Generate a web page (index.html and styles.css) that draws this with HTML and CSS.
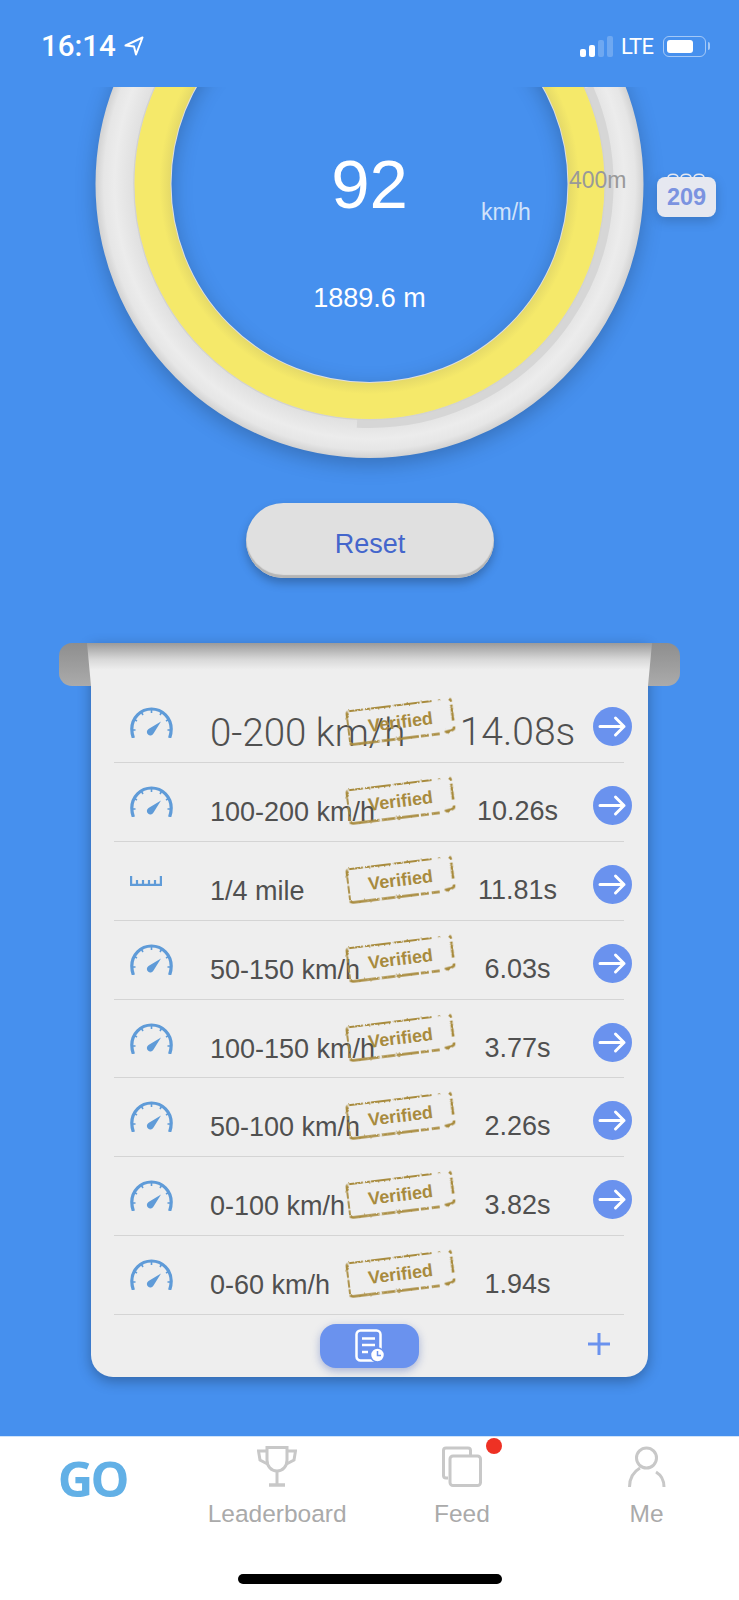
FILE: index.html
```html
<!DOCTYPE html>
<html lang="en">
<head>
  <meta charset="UTF-8" />
  <meta name="viewport" content="width=device-width, initial-scale=1.0" />
  <title>GO</title>
  <link rel="stylesheet" href="styles.css">
</head>
<body>
  <svg class="sprite" width="0" height="0">
    <defs>
      <filter id="rough" x="-5%" y="-10%" width="110%" height="120%">
        <feTurbulence type="fractalNoise" baseFrequency="0.4" numOctaves="2" seed="4" />
        <feDisplacementMap in="SourceGraphic" scale="2.6" />
      </filter>
      <symbol id="stamp" viewBox="0 0 109 38">
        <g filter="url(#rough)" fill="none" stroke="#a88b3e">
          <path stroke-width="2.2" stroke-dasharray="7 1.5 14 2 5 1 20 3 9 1 16 2 10" d="M2 9V5Q2 2 5 2H105" />
          <path stroke-width="2.6" stroke-dasharray="4 3 16 6 12" d="M105 2Q107 2 107 5V31Q107 33 104 33.500L97 34.500" />
          <path stroke-width="2.6" stroke-dasharray="8 3 8 2 22 1.500 14 2 30 3" d="M92 35.500H5Q2 35.500 2 33" />
          <path stroke-width="1.800" stroke-dasharray="5 1.500 8 2 7" d="M2 33V9" />
        </g>
      </symbol>
      <symbol id="speedo" viewBox="0 0 43 31">
        <g fill="none" stroke="#5f9bd8" stroke-linecap="butt">
          <path stroke-width="3.200" d="M3.400 31C2.300 28 1.800 25 1.800 22 1.800 11 10.600 2 21.500 2S41.200 11 41.200 22C41.200 25 40.700 28 39.600 31" />
          <path stroke-width="1.600" d="M21.500 3V6M11.500 5.500L13 8M31.500 5.500L30 8M4.500 12.500L7 14M38.500 12.500L36 14M2.500 23H5.500M40.500 23H37.500" />
        </g>
        <path fill="#5f9bd8" d="M31 14.500L23.500 26.500A3.500 3.500 0 1 1 18.500 22Z" />
      </symbol>
      <symbol id="ruler" viewBox="0 0 32 10">
        <path fill="none" stroke="#5f9bd8" stroke-width="2.200" d="M1.100 0V8.900H30.900V0M7 4V9M13 4V9M19 4V9M25 4V9" />
      </symbol>
      <symbol id="go-arrow" viewBox="0 0 39 39">
        <circle cx="19.500" cy="19.500" r="19.500" fill="#6a92ee" />
        <path fill="none" stroke="#fff" stroke-width="3" stroke-linecap="round" stroke-linejoin="round" d="M7 19.500H31M22.500 11L31 19.500 22.500 28" />
      </symbol>
    </defs>
  </svg>

  <div class="page">
    <div class="status">
      <div class="status-left">
        <span class="clock">16:14</span>
        <svg class="loc" viewBox="0 0 20 20" width="20" height="20"><path fill="none" stroke="#fff" stroke-width="2" stroke-linejoin="round" d="M18.500 1.500L1.500 9.500 10 10.500 12 18.500Z" /></svg>
      </div>
      <div class="status-right">
        <div class="signal">
          <span class="bar bar1"></span>
          <span class="bar bar2"></span>
          <span class="bar bar3 off"></span>
          <span class="bar bar4 off"></span>
        </div>
        <span class="lte">LTE</span>
        <div class="battery"><span class="battery-fill"></span></div>
        <span class="battery-nub"></span>
      </div>
    </div>

    <div class="gauge">
      <svg class="dial" viewBox="0 87 739 410" width="739" height="410">
        <defs>
          <radialGradient id="rim" gradientUnits="userSpaceOnUse" cx="369.500" cy="184" r="274">
            <stop offset="0.85" stop-color="#dedede" />
            <stop offset="0.93" stop-color="#ececec" />
            <stop offset="0.97" stop-color="#e6e6e6" />
            <stop offset="1" stop-color="#d2d2d2" />
          </radialGradient>
          <radialGradient id="band" gradientUnits="userSpaceOnUse" cx="369.500" cy="184" r="236">
            <stop offset="0.84" stop-color="#e4d968" />
            <stop offset="0.89" stop-color="#f5e96a" />
            <stop offset="1" stop-color="#f5e96a" />
          </radialGradient>
        </defs>
        <circle class="rim" cx="369.500" cy="184" r="236" fill="none" stroke="url(#rim)" stroke-width="76" />
        <path d="M357 423.200A239.500 239.500 0 0 0 588.500 87" fill="none" stroke="#d6d6d6" stroke-width="9" />
        <circle cx="369.500" cy="184" r="235.500" fill="none" stroke="#d2d2d2" stroke-width="1.500" />
        <circle cx="369.500" cy="184" r="217" fill="none" stroke="url(#band)" stroke-width="36" />
      </svg>
      <div class="speed">92</div>
      <div class="unit">km/h</div>
      <div class="distance">1889.6 m</div>
      <div class="mark">400m</div>
      <div class="badge">
        <svg class="badge-rings" viewBox="0 0 38 7" width="38" height="7"><path fill="none" stroke="#e6e8f0" stroke-width="1.500" d="M1 7C1 2 11 2 11 7M14 7C14 2 24 2 24 7M27 7C27 2 37 2 37 7" /></svg>
        209
      </div>
    </div>

    <button class="reset">Reset</button>

    <div class="paper">
      <span class="ear ear-left"></span>
      <span class="ear ear-right"></span>
      <span class="paper-top"></span>

      <div class="rows">
        <div class="row row-big">
          <svg class="icon"><use href="#speedo" /></svg>
          <span class="name">0-200 km/h</span>
          <span class="time">14.08s</span>
          <svg class="arrow"><use href="#go-arrow" /></svg>
          <div class="stamp"><svg><use href="#stamp" /></svg><span>Verified</span></div>
        </div>
        <div class="row">
          <svg class="icon"><use href="#speedo" /></svg>
          <span class="name">100-200 km/h</span>
          <span class="time">10.26s</span>
          <svg class="arrow"><use href="#go-arrow" /></svg>
          <div class="stamp"><svg><use href="#stamp" /></svg><span>Verified</span></div>
        </div>
        <div class="row">
          <svg class="icon icon-ruler"><use href="#ruler" /></svg>
          <span class="name">1/4 mile</span>
          <span class="time">11.81s</span>
          <svg class="arrow"><use href="#go-arrow" /></svg>
          <div class="stamp"><svg><use href="#stamp" /></svg><span>Verified</span></div>
        </div>
        <div class="row">
          <svg class="icon"><use href="#speedo" /></svg>
          <span class="name">50-150 km/h</span>
          <span class="time">6.03s</span>
          <svg class="arrow"><use href="#go-arrow" /></svg>
          <div class="stamp"><svg><use href="#stamp" /></svg><span>Verified</span></div>
        </div>
        <div class="row">
          <svg class="icon"><use href="#speedo" /></svg>
          <span class="name">100-150 km/h</span>
          <span class="time">3.77s</span>
          <svg class="arrow"><use href="#go-arrow" /></svg>
          <div class="stamp"><svg><use href="#stamp" /></svg><span>Verified</span></div>
        </div>
        <div class="row">
          <svg class="icon"><use href="#speedo" /></svg>
          <span class="name">50-100 km/h</span>
          <span class="time">2.26s</span>
          <svg class="arrow"><use href="#go-arrow" /></svg>
          <div class="stamp"><svg><use href="#stamp" /></svg><span>Verified</span></div>
        </div>
        <div class="row">
          <svg class="icon"><use href="#speedo" /></svg>
          <span class="name">0-100 km/h</span>
          <span class="time">3.82s</span>
          <svg class="arrow"><use href="#go-arrow" /></svg>
          <div class="stamp"><svg><use href="#stamp" /></svg><span>Verified</span></div>
        </div>
        <div class="row">
          <svg class="icon"><use href="#speedo" /></svg>
          <span class="name">0-60 km/h</span>
          <span class="time">1.94s</span>
          <div class="stamp"><svg><use href="#stamp" /></svg><span>Verified</span></div>
        </div>
      </div>

      <div class="paper-foot">
        <div class="log-btn">
          <svg viewBox="0 0 30 34" width="30" height="34">
            <rect x="1.500" y="1.500" width="24" height="30" rx="4" fill="none" stroke="#fff" stroke-width="2.500" />
            <path fill="none" stroke="#fff" stroke-width="2.500" d="M7 9.500H20M7 16H20M7 23H13" />
            <circle cx="22.500" cy="26" r="7" fill="#fff" stroke="#6a92ee" stroke-width="1.500" />
            <path fill="none" stroke="#6a92ee" stroke-width="1.500" d="M22.500 22V26.500H26" />
          </svg>
        </div>
        <svg class="plus" viewBox="0 0 22 22" width="22" height="22"><path fill="none" stroke="#6a92ee" stroke-width="3" d="M11 0V22M0 11H22" /></svg>
      </div>
    </div>

    <div class="tabbar">
      <div class="tabs">
        <div class="tab"><span class="go">GO</span></div>
        <div class="tab">
          <svg class="tab-icon" viewBox="0 0 40 41" width="40" height="41">
            <g fill="none" stroke="#c8c8c8" stroke-width="3">
              <path d="M10 1.500H30V14C30 20 26 25 20 25S10 20 10 14Z" />
              <path d="M10 5H1.500L3 14 10.500 18M30 5H38.500L37 14 29.500 18" />
              <path d="M20 25V38" />
              <path stroke-width="3.500" d="M12 39H28" />
            </g>
          </svg>
          <span class="tab-label">Leaderboard</span>
        </div>
        <div class="tab">
          <div class="feed-icon">
            <svg class="tab-icon" viewBox="0 0 40 41" width="40" height="41">
              <g fill="none" stroke="#c8c8c8" stroke-width="3">
                <path d="M6 32H4Q1.500 32 1.500 29.500V4.500Q1.500 2 4 2H26Q28.500 2 28.500 4.500V9" />
                <rect x="8" y="10" width="30.500" height="29.500" rx="3" />
              </g>
            </svg>
            <span class="dot"></span>
          </div>
          <span class="tab-label">Feed</span>
        </div>
        <div class="tab">
          <svg class="tab-icon" viewBox="0 0 38 41" width="38" height="41">
            <g fill="none" stroke="#c8c8c8" stroke-width="3">
              <circle cx="18.500" cy="12" r="10" />
              <path d="M1.500 41C1.500 32 5 26 12 22M28 26C33 29 36 34 36 41" />
            </g>
          </svg>
          <span class="tab-label">Me</span>
        </div>
      </div>
      <div class="home-bar"></div>
    </div>
  </div>
</body>
</html>
```

FILE: styles.css
```css
* {
  box-sizing: border-box;
}
body {
  margin: 0;
  font-family: 'Liberation Sans', Arial, sans-serif;
  background: #4690ee;
}
.sprite {
  display: block;
}
.page {
  width: 739px;
  height: 1600px;
  overflow: hidden;
  display: flex;
  flex-direction: column;
}

/* status bar */
.status {
  height: 87px;
  flex: none;
  display: flex;
  justify-content: space-between;
  align-items: flex-start;
  padding: 31px 29px 0 41px;
  color: #fff;
}
.status-left {
  display: flex;
  align-items: center;
  gap: 8px;
}
.clock {
  font-family: Roboto, sans-serif;
  font-weight: 500;
  font-size: 29.5px;
  line-height: 30px;
}
.status-right {
  display: flex;
  align-items: center;
  height: 30px;
}
.signal {
  display: flex;
  align-items: flex-end;
  gap: 3px;
  height: 21px;
}
.bar {
  width: 6px;
  background: #fff;
  border-radius: 2px;
}
.bar1 { height: 8px; }
.bar2 { height: 12px; }
.bar3 { height: 17px; }
.bar4 { height: 21px; }
.bar.off {
  background: rgba(255, 255, 255, 0.22);
}
.lte {
  font-family: Roboto, sans-serif;
  font-size: 22px;
  letter-spacing: -0.8px;
  margin-left: 8px;
  width: 42px;
}
.battery {
  width: 43px;
  height: 21px;
  padding: 3px;
  border: 1.5px solid rgba(255, 255, 255, 0.5);
  border-radius: 6px;
}
.battery-fill {
  display: block;
  width: 26px;
  height: 100%;
  background: #fff;
  border-radius: 3px;
}
.battery-nub {
  width: 2px;
  height: 8px;
  margin-left: 2px;
  background: rgba(255, 255, 255, 0.5);
  border-radius: 0 2px 2px 0;
}

/* gauge */
.gauge {
  position: relative;
  height: 380px;
  flex: none;
  color: #fff;
}
.dial {
  display: block;
}
.rim {
  filter: drop-shadow(0 6px 10px rgba(0, 0, 0, 0.22));
}
.speed {
  position: absolute;
  left: 0;
  right: 0;
  top: 64px;
  text-align: center;
  font-size: 69px;
  line-height: 68px;
}
.unit {
  position: absolute;
  left: 481px;
  top: 112px;
  font-size: 23px;
  line-height: 26px;
  color: rgba(255, 255, 255, 0.75);
}
.distance {
  position: absolute;
  left: 0;
  right: 0;
  top: 195px;
  text-align: center;
  font-size: 27px;
  line-height: 32px;
}
.mark {
  position: absolute;
  left: 569px;
  top: 80px;
  font-size: 23px;
  line-height: 26px;
  color: #999;
}
.badge {
  position: absolute;
  left: 657px;
  top: 90px;
  width: 59px;
  height: 40px;
  background: #e6e8f0;
  border-radius: 8px;
  box-shadow: 0 4px 12px rgba(0, 0, 0, 0.18);
  color: #7b93e0;
  font-size: 23.5px;
  font-weight: bold;
  line-height: 40px;
  text-align: center;
}
.badge-rings {
  position: absolute;
  left: 10px;
  top: -6px;
}

/* reset */
.reset {
  position: relative;
  display: block;
  flex: none;
  width: 248px;
  height: 75px;
  margin: 36px 0 0 246px;
  padding: 8px 0 0;
  border: none;
  border-radius: 38px;
  background: #e0e0e0;
  box-shadow: inset 0 -3px 1px #b5b5b5, 0 5px 10px rgba(0, 0, 0, 0.25);
  color: #4466cc;
  font-family: inherit;
  font-size: 27px;
}

/* paper sheet with the result rows */
.paper {
  position: relative;
  flex: none;
  width: 557px;
  height: 734px;
  margin: 65px 0 0 91px;
  padding-top: 41px;
  background: #eeeeee;
  border-radius: 0 0 22px 22px;
  box-shadow: 0 4px 14px rgba(0, 0, 0, 0.3);
}
.ear {
  position: absolute;
  top: 0;
  width: 40px;
  height: 43px;
  background: linear-gradient(#8e8e8e, #ababab);
}
.ear-left {
  left: -32px;
  border-radius: 13px 0 0 13px;
}
.ear-right {
  right: -32px;
  border-radius: 0 13px 13px 0;
}
.paper-top {
  position: absolute;
  top: 0;
  left: -4px;
  right: -4px;
  height: 43px;
  background: linear-gradient(#9a9a9a, #d8d8d8 38%, #eeeeee 62%);
  clip-path: polygon(0 0, 100% 0, calc(100% - 4px) 100%, 4px 100%);
}
.rows {
  position: relative;
  width: 510px;
  margin-left: 23px;
}
.row {
  position: relative;
  height: 78.9px;
  display: grid;
  grid-template-columns: 96px 230px 153px 39px;
  align-items: start;
  border-bottom: 1px solid #d4d4d4;
  color: #505050;
}
.icon {
  width: 43px;
  height: 31px;
  margin: 23px 0 0 16px;
}
.icon-ruler {
  width: 32px;
  height: 10px;
  margin-top: 34px;
}
.name {
  margin-top: 32px;
  font-size: 27px;
  line-height: 34px;
  white-space: nowrap;
}
.time {
  margin-top: 31px;
  padding-left: 2px;
  font-size: 27px;
  line-height: 34px;
  text-align: center;
}
.row-big .name {
  margin-top: 27px;
  font-family: Roboto, 'Liberation Sans', sans-serif;
  font-weight: 300;
  font-size: 38.5px;
  line-height: 44px;
}
.row-big .time {
  margin-top: 26px;
  font-family: Roboto, 'Liberation Sans', sans-serif;
  font-weight: 300;
  font-size: 39px;
  line-height: 44px;
}
.arrow {
  grid-column: 4;
  width: 39px;
  height: 39px;
  margin-top: 23px;
}
.stamp {
  position: absolute;
  left: 232px;
  top: 19px;
  width: 109px;
  height: 38px;
  transform: rotate(-7deg);
  color: #a88b3e;
  font-size: 18px;
  font-weight: bold;
  line-height: 38px;
  text-align: center;
}
.stamp svg {
  position: absolute;
  left: 0;
  top: 0;
  width: 109px;
  height: 38px;
}
.stamp span {
  position: relative;
}
.paper-foot {
  display: grid;
  grid-template-columns: 1fr auto 1fr;
  align-items: start;
  padding-top: 9px;
}
.log-btn {
  grid-column: 2;
  width: 99px;
  height: 44px;
  display: flex;
  align-items: center;
  justify-content: center;
  background: #6a92ee;
  border-radius: 16px;
  box-shadow: 0 3px 8px rgba(60, 90, 180, 0.4);
}
.plus {
  justify-self: end;
  margin: 9px 38px 0 0;
}

/* tab bar */
.tabbar {
  flex: none;
  height: 164px;
  margin-top: 59px;
  background: #fff;
  border-top: 1px solid #cfe4fb;
}
.tabs {
  display: grid;
  grid-template-columns: repeat(4, 1fr);
  padding-top: 9px;
}
.tab {
  display: flex;
  flex-direction: column;
  align-items: center;
}
.go {
  margin-top: 7px;
  font-family: 'Open Sans', sans-serif;
  font-weight: 700;
  font-size: 49px;
  line-height: 50px;
  letter-spacing: -2.5px;
  color: #62b0e6;
}
.tab-icon {
  display: block;
}
.tab-label {
  margin-top: 13px;
  font-size: 24.5px;
  line-height: 28px;
  color: #aaa;
}
.feed-icon {
  position: relative;
}
.dot {
  position: absolute;
  left: 44px;
  top: -8px;
  width: 16px;
  height: 16px;
  background: #ee3124;
  border-radius: 50%;
}
.home-bar {
  width: 264px;
  height: 10px;
  margin: 46px auto 0;
  background: #000;
  border-radius: 5px;
}
```
